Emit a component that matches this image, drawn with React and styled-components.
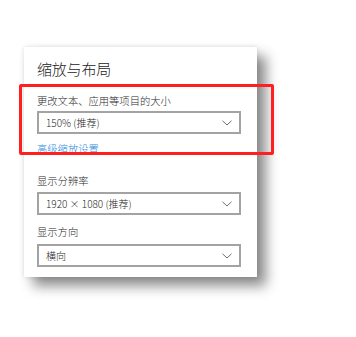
import React from "react";
import styled, { createGlobalStyle } from "styled-components";

const Global = createGlobalStyle`
  html, body { margin: 0; padding: 0; background: #ffffff; }
  body { font-family: "Noto Sans CJK SC", "Noto Sans", sans-serif; }
`;

const Page = styled.div`
  position: relative;
  width: 356px;
  height: 337px;
  overflow: hidden;
  background: #ffffff;
  padding: 47px 0 0 24px;
  box-sizing: border-box;
`;

const Panel = styled.div`
  width: 233px;
  height: 230px;
  box-sizing: border-box;
  background: #ffffff;
  padding: 12px 16px 0 13px;
  display: flex;
  flex-direction: column;
  box-shadow: 0 0 5px rgba(0, 0, 0, 0.12), 9px 9px 12px rgba(0, 0, 0, 0.45);
`;

const Title = styled.div`
  font-size: 15px;
  font-weight: 300;
  line-height: 20px;
  color: #1a1a1a;
  letter-spacing: -0.2px;
`;

const Label = styled.div`
  font-size: 10.3px;
  font-weight: 300;
  line-height: 14px;
  color: #2a2a2a;
  margin-top: ${(p) => p.$mt}px;
`;

const Select = styled.div`
  height: 23px;
  box-sizing: border-box;
  border: 2px solid #a3a3a3;
  margin-top: ${(p) => p.$mt}px;
  display: flex;
  align-items: center;
  justify-content: space-between;
  padding: 0 7px 0 7px;
  font-size: 10px;
  font-weight: 300;
  color: #1f1f1f;
`;

const Link = styled.div`
  font-size: 10.3px;
  font-weight: 300;
  line-height: 14px;
  color: #2b88d8;
  margin-top: 8px;
`;

const Highlight = styled.div`
  position: absolute;
  left: 19px;
  top: 84px;
  width: 255px;
  height: 71px;
  box-sizing: border-box;
  border: 3px solid #ff1f1f;
  border-radius: 2px;
  pointer-events: none;
`;

const Chevron = () => (
  <svg width="10" height="6" viewBox="0 0 10 6">
    <polyline points="0.5,0.8 5,5 9.5,0.8" fill="none" stroke="#6e6e6e" strokeWidth="1" />
  </svg>
);

export default function App() {
  return (
    <>
      <Global />
      <Page>
        <Panel>
          <Title>缩放与布局</Title>
          <Label $mt={15}>更改文本、应用等项目的大小</Label>
          <Select $mt={3}>
            <span>150% (推荐)</span>
            <Chevron />
          </Select>
          <Link>高级缩放设置</Link>
          <Label $mt={18}>显示分辨率</Label>
          <Select $mt={4}>
            <span>1920 × 1080 (推荐)</span>
            <Chevron />
          </Select>
          <Label $mt={10}>显示方向</Label>
          <Select $mt={5}>
            <span>横向</span>
            <Chevron />
          </Select>
        </Panel>
        <Highlight />
      </Page>
    </>
  );
}
